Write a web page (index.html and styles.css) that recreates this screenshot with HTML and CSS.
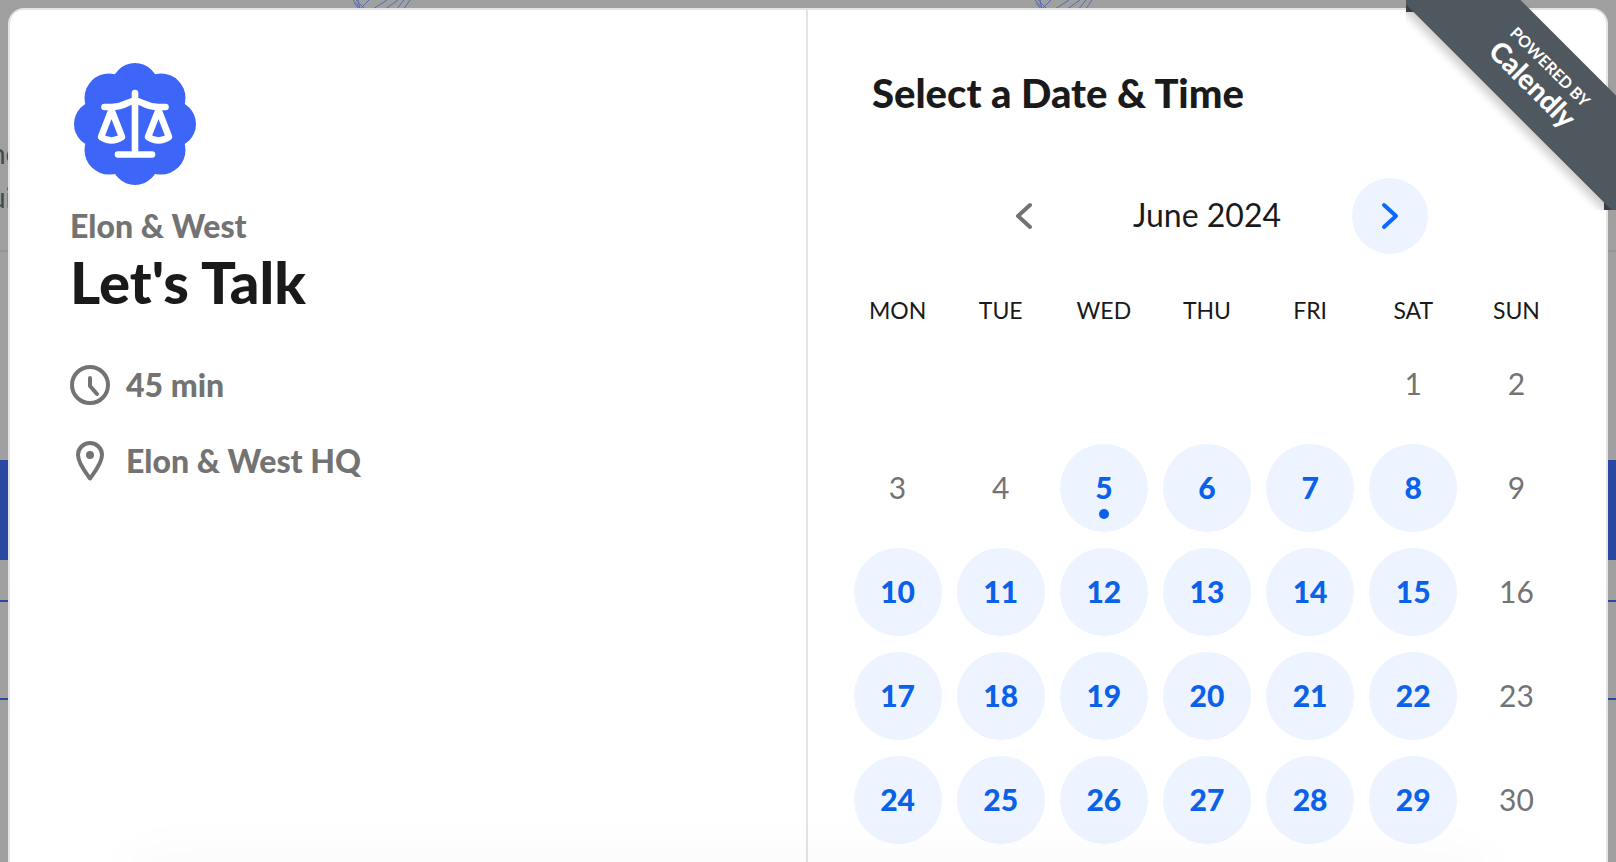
FILE: index.html
```html
<!DOCTYPE html>
<html lang="en">
<head>
<meta charset="utf-8">
<title>Let's Talk - Elon &amp; West</title>
<link rel="stylesheet" href="styles.css">
<script src="calendar.js" defer></script>
</head>
<body>
<div class="backdrop" aria-hidden="true">
  <svg class="sketch sketch-a" width="60" height="10" viewBox="0 0 60 10"><path d="M0 0l9 10M3 0l10 10M1 3l6 7M16 0L6 10M34 0L20 9M45 0L31 10M51 0l-8 10M57 0l-7 10M5 0l2 10"/></svg>
  <svg class="sketch sketch-b" width="60" height="10" viewBox="0 0 60 10"><path d="M0 0l9 10M3 0l10 10M1 3l6 7M16 0L6 10M34 0L20 9M45 0L31 10M51 0l-8 10M57 0l-7 10M5 0l2 10"/></svg>
  <p class="copy">ne<br>ui</p>
  <div class="rule"></div>
  <div class="band"></div>
  <div class="field"></div>
</div>

<main class="modal">
  <section class="details">
    <svg class="logo" width="124" height="124" viewBox="0 0 124 124" role="img" aria-label="Elon &amp; West logo">
      <g fill="#3d66f9">
        <circle cx="62" cy="62" r="50"/>
        <circle cx="62" cy="24.500" r="23.500"/><circle cx="62" cy="99.500" r="23.500"/>
        <circle cx="24.500" cy="62" r="23.500"/><circle cx="99.500" cy="62" r="23.500"/>
        <circle cx="36" cy="36" r="24.500"/><circle cx="88" cy="36" r="24.500"/>
        <circle cx="36" cy="88" r="24.500"/><circle cx="88" cy="88" r="24.500"/>
      </g>
      <g fill="none" stroke="#fff" stroke-width="6.600" stroke-linecap="round" stroke-linejoin="round">
        <path d="M62 31v60M45 92.500h34M31.500 45h7q8 0 16-4l7.500-3 7.500 3q8 4 16 4h7"/>
        <path d="M38.500 48L28 75q10.500 7 21 0zM85.500 48L75 75q10.500 7 21 0z"/>
      </g>
    </svg>
    <p class="host">Elon &amp; West</p>
    <h1 class="title">Let's Talk</h1>
    <ul class="facts">
      <li class="fact">
        <svg width="40" height="40" viewBox="0 0 40 40" fill="none" stroke="currentColor" stroke-width="4" stroke-linecap="round" stroke-linejoin="round"><circle cx="20" cy="20" r="18"/><path d="M20 13v8l7 8"/></svg>
        <span>45 min</span>
      </li>
      <li class="fact">
        <svg width="40" height="40" viewBox="0 0 40 40" fill="none" stroke="currentColor" stroke-width="4" stroke-linejoin="round"><path d="M20 37.500C16 32 8 22 8 14a12 12 0 0 1 24 0c0 8-8 18-12 23.500z"/><circle cx="20" cy="14" r="4" fill="currentColor" stroke="none"/></svg>
        <span>Elon &amp; West HQ</span>
      </li>
    </ul>
  </section>

  <section class="picker">
    <h2 class="heading">Select a Date &amp; Time</h2>
    <div class="month">
      <button class="step" type="button" aria-label="Previous month" disabled>
        <svg width="28" height="28" viewBox="0 0 28 28"><path d="M20 3L8 14l12 11"/></svg>
      </button>
      <span class="month-name">June 2024</span>
      <button class="step step-next" type="button" aria-label="Next month">
        <svg width="28" height="28" viewBox="0 0 28 28"><path d="M8 3l12 11L8 25"/></svg>
      </button>
    </div>
    <table class="calendar">
      <thead>
        <tr><th>MON</th><th>TUE</th><th>WED</th><th>THU</th><th>FRI</th><th>SAT</th><th>SUN</th></tr>
      </thead>
      <tbody id="days"></tbody>
    </table>
  </section>
</main>

<a class="badge" href="#calendly">
  <span class="fold fold-left"></span>
  <span class="fold fold-right"></span>
  <span class="ribbon"><span class="ribbon-small">POWERED BY</span><span class="ribbon-name">Calendly</span></span>
</a>
</body>
</html>
```
FILE: calendar.js
```js
const body = document.getElementById("days");
const firstColumn = 5;
const today = 5;
const dayCount = 30;

for (let start = 1 - firstColumn; start <= dayCount; start += 7) {
  const row = body.insertRow();
  for (let column = 0; column < 7; column++) {
    const day = start + column;
    const cell = row.insertCell();
    if (day < 1 || day > dayCount) continue;
    const button = document.createElement("button");
    button.type = "button";
    button.className = "day";
    button.textContent = day;
    button.disabled = day < today || column === 6;
    if (day === today) button.classList.add("day-today");
    cell.append(button);
  }
}
```
FILE: styles.css
```css
* {
  box-sizing: border-box;
}

body {
  margin: 0;
  height: 100vh;
  padding: 8px 8px 0;
  overflow: hidden;
  position: relative;
  background: #a0a0a1;
  color: #1a1a1a;
  font-family: Lato, "Liberation Sans", sans-serif;
}

h1, h2, p, ul {
  margin: 0;
  padding: 0;
}

button {
  border: 0;
  padding: 0;
  background: none;
  font: inherit;
}

/* Page behind the dialog */
.backdrop {
  position: absolute;
  inset: 0;
  overflow: hidden;
}

.sketch {
  position: absolute;
  top: 0;
  fill: none;
  stroke: #5569b0;
  stroke-width: 1;
}

.sketch-a {
  left: 353px;
}

.sketch-b {
  left: 1035px;
}

.copy {
  position: absolute;
  top: 131px;
  left: -10px;
  color: #414b58;
  font-size: 28px;
  line-height: 44px;
}

.rule {
  position: absolute;
  top: 250px;
  width: 100%;
  height: 2px;
  background: #949496;
}

.band {
  position: absolute;
  top: 460px;
  width: 100%;
  height: 100px;
  background: #2a48a2;
}

.field {
  position: absolute;
  top: 600px;
  width: 100%;
  height: 100px;
  border: solid #2a48a2;
  border-width: 2px 0;
}

/* Dialog */
.modal {
  position: relative;
  display: grid;
  grid-template-columns: 1fr 1fr;
  min-height: 100%;
  border: 2px solid #e4e4e4;
  border-bottom: 0;
  border-radius: 16px 16px 0 0;
  background: #fff;
}

/* Soft shade along the dialog's lower edge */
.modal::after {
  content: "";
  position: absolute;
  right: 120px;
  bottom: -20px;
  left: 120px;
  height: 10px;
  box-shadow: 0 0 60px rgba(0, 0, 0, 0.12);
  pointer-events: none;
}

.details {
  padding: 52px 60px;
  border-right: 2px solid #e4e4e4;
  color: #737373;
  font-weight: 900;
}

.logo {
  display: block;
  margin-left: 3px;
}

.host {
  margin-top: 20px;
  font-size: 32px;
  line-height: 40px;
}

.title {
  color: #1a1a1a;
  font-size: 58px;
  font-weight: 900;
  line-height: 72px;
}

.facts {
  display: grid;
  gap: 36px;
  margin-top: 47px;
  list-style: none;
}

.fact {
  display: flex;
  align-items: center;
  gap: 16px;
  font-size: 32px;
  line-height: 40px;
}

.picker {
  padding: 60px 38px 0;
}

.heading {
  padding-left: 26px;
  font-size: 40px;
  font-weight: 900;
  line-height: 46px;
}

.month {
  display: flex;
  align-items: center;
  justify-content: center;
  margin-top: 62px;
}

.month-name {
  width: 290px;
  padding-bottom: 2px;
  text-align: center;
  font-size: 32px;
  line-height: 40px;
}

.step {
  display: grid;
  place-items: center;
  width: 76px;
  height: 76px;
  border-radius: 50%;
  color: #737373;
}

.step-next {
  background: #edf4ff;
  color: #0b69ff;
}

.step svg {
  fill: none;
  stroke: currentColor;
  stroke-width: 4;
  stroke-linecap: round;
  stroke-linejoin: round;
}

.calendar {
  width: 100%;
  margin-top: 34px;
  border-collapse: collapse;
  table-layout: fixed;
}

.calendar th {
  padding: 0;
  font-size: 23px;
  font-weight: 400;
  line-height: 44px;
}

.calendar td {
  height: 104px;
  padding: 0;
  text-align: center;
}

.day {
  position: relative;
  width: 88px;
  height: 88px;
  padding-bottom: 2px;
  border-radius: 50%;
  background: #edf4ff;
  color: #0b61e8;
  font-size: 30px;
  font-weight: 900;
}

.day:disabled {
  background: none;
  color: #737373;
  font-weight: 400;
}

.day-today::after {
  content: "";
  position: absolute;
  bottom: 13px;
  left: 39px;
  width: 10px;
  height: 10px;
  border-radius: 50%;
  background: currentColor;
}

/* Corner ribbon */
.badge {
  position: absolute;
  top: 0;
  right: 0;
  width: 210px;
  height: 210px;
  overflow: hidden;
  color: #fff;
  text-decoration: none;
}

.fold {
  position: absolute;
  width: 12px;
  height: 12px;
  background: #434b53;
}

.fold-left {
  top: 0;
  left: 0;
}

.fold-right {
  right: 0;
  bottom: 0;
}

.ribbon {
  position: absolute;
  top: 36px;
  left: -67px;
  display: flex;
  flex-direction: column;
  align-items: center;
  justify-content: center;
  width: 400px;
  height: 84px;
  background: #50585f;
  box-shadow: 0 6px 10px rgba(0, 0, 0, 0.2);
  transform: rotate(45deg);
}

.ribbon-small {
  font-size: 16px;
  font-weight: 700;
  line-height: 16px;
}

.ribbon-name {
  font-size: 28px;
  font-weight: 900;
  line-height: 32px;
}
```
